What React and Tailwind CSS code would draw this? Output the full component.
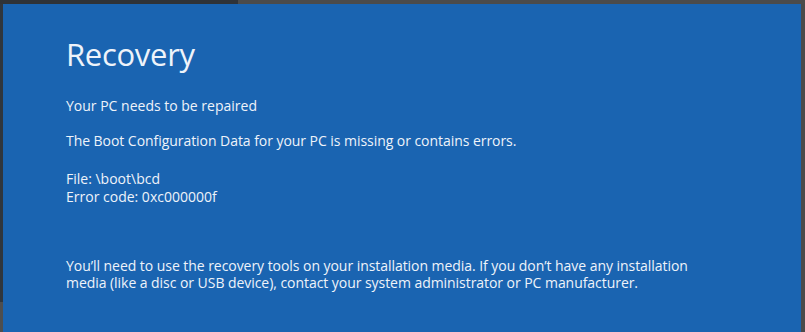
export default function App() {
  const font = { fontFamily: '"Open Sans", "Noto Sans", sans-serif' };
  return (
    <div className="w-[805px] h-[332px] flex flex-col bg-[#4a4a4a] overflow-hidden" style={font}>
      <div className="h-[4px] flex">
        <div className="w-[238px] bg-[#2f3338]" />
        <div className="flex-1 bg-[#4b4b4b]" />
      </div>
      <div className="flex flex-1">
        <div className="w-[3px] flex flex-col">
          <div className="h-[298px] bg-[#30363d]" />
          <div className="flex-1 bg-[#4e4e4e]" />
        </div>
        <div className="flex-1 bg-[#1a64b1] text-[#eef3fa] pl-[63px] pt-[30px]">
          <div className="text-[31px] leading-[40px] tracking-[-0.3px]">Recovery</div>
          <div className="text-[14px] leading-[20px] mt-[22px]">Your PC needs to be repaired</div>
          <div className="text-[14px] leading-[20px] mt-[15px] tracking-[-0.05px]">The Boot Configuration Data for your PC is missing or contains errors.</div>
          <div className="text-[14px] leading-[18px] mt-[19px]">
            <div>File: \boot\bcd</div>
            <div>Error code: 0xc000000f</div>
          </div>
          <div className="text-[14px] leading-[17px] mt-[51px] w-[640px] tracking-[-0.05px]">
            You’ll need to use the recovery tools on your installation media. If you don’t have any installation media (like a disc or USB device), contact your system administrator or PC manufacturer.
          </div>
        </div>
        <div className="w-[4px] bg-[#4a4a4a]" />
      </div>
    </div>
  );
}
